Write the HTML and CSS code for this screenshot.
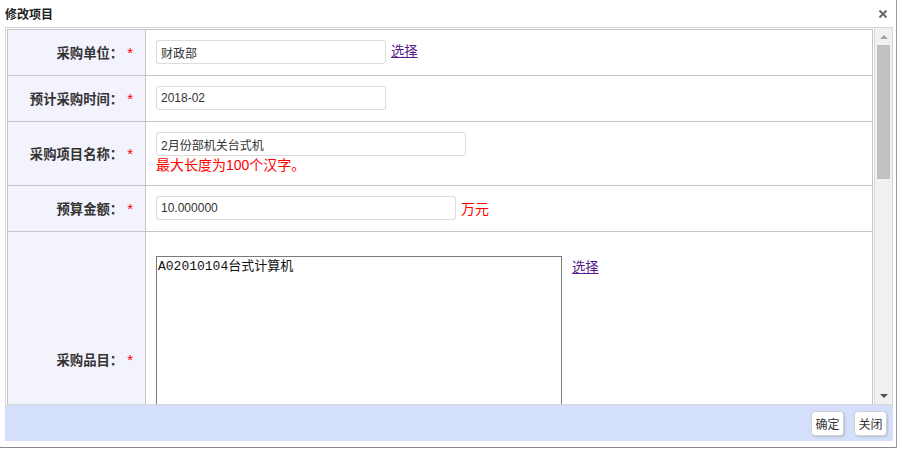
FILE: index.html
```html
<!DOCTYPE html>
<html lang="zh-CN">
<head>
    <meta charset="UTF-8">
    <title>修改项目</title>
    <link rel="stylesheet" href="styles.css">
</head>
<body>
    <div class="dialog">
        <div class="dialog-head">
            <span class="dialog-title">修改项目</span>
            <a href="#" class="dialog-close" title="关闭">
                <svg width="8" height="8" viewBox="0 0 8 8">
                    <path d="M0.5 0.5 L7.5 7.5 M7.5 0.5 L0.5 7.5" stroke="#6a6a6a" stroke-width="2" fill="none"/>
                </svg>
            </a>
        </div>

        <div class="dialog-body">
            <div class="form-scroll">
                <table class="form-table">
                    <tr>
                        <th>采购单位：<span class="req">*</span></th>
                        <td>
                            <div class="field">
                                <input type="text" class="txt" value="财政部">
                                <a href="#" class="pick">选择</a>
                            </div>
                        </td>
                    </tr>
                    <tr>
                        <th>预计采购时间：<span class="req">*</span></th>
                        <td>
                            <div class="field">
                                <input type="text" class="txt" value="2018-02">
                            </div>
                        </td>
                    </tr>
                    <tr>
                        <th>采购项目名称：<span class="req">*</span></th>
                        <td class="with-hint">
                            <div class="field">
                                <input type="text" class="txt txt-long" value="2月份部机关台式机">
                            </div>
                            <div class="hint">最大长度为100个汉字。</div>
                        </td>
                    </tr>
                    <tr>
                        <th>预算金额：<span class="req">*</span></th>
                        <td>
                            <div class="field">
                                <input type="text" class="txt txt-money" value="10.000000">
                                <span class="unit">万元</span>
                            </div>
                        </td>
                    </tr>
                    <tr>
                        <th>采购品目：<span class="req">*</span></th>
                        <td class="with-area">
                            <div class="field field-top">
                                <textarea class="area">A02010104台式计算机</textarea>
                                <a href="#" class="pick">选择</a>
                            </div>
                        </td>
                    </tr>
                </table>
            </div>

            <!-- scrollbar of the form area -->
            <div class="scrollbar">
                <div class="sb-btn"><span class="arrow-up"></span></div>
                <div class="sb-track"><div class="sb-thumb"></div></div>
                <div class="sb-btn"><span class="arrow-down"></span></div>
            </div>
        </div>

        <div class="dialog-foot">
            <button class="btn">确定</button>
            <button class="btn">关闭</button>
        </div>
    </div>
</body>
</html>
```

FILE: styles.css
```css
body {
    margin: 0;
    font-family: "Liberation Sans", "Noto Sans CJK SC", sans-serif;
    background-color: #fff;
    color: #333;
}

.dialog {
    width: 896px;
    height: 447px;
    border-right: 1px solid #9a9a9a;
    border-bottom: 1px solid #8a8a8a;
    background: #fff;
}

.dialog-head {
    height: 27px;
    display: flex;
    align-items: center;
    justify-content: space-between;
    padding: 0 9px 0 5px;
}

.dialog-title {
    font-size: 12px;
    font-weight: bold;
    color: #222;
}

.dialog-close {
    display: flex;
    margin-top: 1px;
}

.dialog-body {
    display: flex;
    height: 376px;
    margin: 0 3px 0 5px;
    border: 1px solid #d6d6d6;
}

.form-scroll {
    flex: 1;
    overflow: hidden;
    padding: 1px 1px 0 1px;
}

.form-table {
    width: 100%;
    border-collapse: collapse;
    border: 1px solid #c6c6c6;
}

.form-table th,
.form-table td {
    border: 1px solid #c6c6c6;
}

.form-table th {
    width: 125px;
    padding: 0 12px 0 0;
    background-color: #f3f3fd;
    text-align: right;
    font-size: 13.33px;
    font-weight: bold;
    color: #333;
    white-space: nowrap;
}

.req {
    color: #f00;
    font-weight: normal;
    font-size: 15px;
    margin-left: 4px;
}

.form-table td {
    padding: 10px 10px 11px;
    background: #fff;
}

.field {
    display: flex;
    align-items: center;
    gap: 5px;
    height: 24px;
}

.field-top {
    align-items: flex-start;
    gap: 10px;
    height: auto;
}

.txt {
    width: 230px;
    height: 24px;
    box-sizing: border-box;
    padding: 0 4px;
    border: 1px solid #dcdcdc;
    border-radius: 3px;
    font-family: "Liberation Sans", "Noto Sans CJK SC", sans-serif;
    font-size: 12px;
    color: #333;
    margin: 0;
}

.txt-long {
    width: 310px;
}

.txt-money {
    width: 300px;
}

.pick {
    color: #551a8b;
    font-size: 13.33px;
    line-height: 16px;
    text-decoration: underline;
}

.field-top .pick {
    margin-top: 4px;
}

.unit,
.hint {
    color: #f00;
    font-size: 14px;
}

.hint {
    line-height: 18px;
}

.form-table td.with-hint {
    padding-bottom: 11px;
}

.form-table td.with-area {
    padding: 24px 10px;
}

.area {
    width: 406px;
    height: 206px;
    box-sizing: border-box;
    margin: 0;
    padding: 2px 1px;
    border: 1px solid #7a7a7a;
    font-family: "Liberation Mono", "Noto Sans CJK SC", monospace;
    font-size: 13px;
    line-height: 15px;
    color: #111;
    resize: none;
}

/* hand drawn scrollbar */
.scrollbar {
    width: 17px;
    display: flex;
    flex-direction: column;
    background-color: #f1f1f1;
    border-left: 1px solid #dadada;
}

.sb-btn {
    height: 17px;
    display: flex;
    align-items: center;
    justify-content: center;
}

.arrow-up,
.arrow-down {
    width: 0;
    height: 0;
    border-left: 4px solid transparent;
    border-right: 4px solid transparent;
}

.arrow-up {
    border-bottom: 4px solid #a3a3a3;
}

.arrow-down {
    border-top: 4px solid #505050;
}

.sb-track {
    flex: 1;
    padding: 0 2px;
}

.sb-thumb {
    height: 134px;
    background-color: #c1c1c1;
}

.dialog-foot {
    height: 36px;
    margin: 0 3px 0 5px;
    background-color: #d4dffb;
    display: flex;
    justify-content: flex-end;
    align-items: flex-start;
    gap: 10px;
    padding: 6px 6px 0 0;
    box-sizing: border-box;
}

.btn {
    width: 33px;
    height: 25px;
    padding: 0;
    background: #fff;
    border: 1px solid #d2d2d2;
    border-radius: 4px;
    box-shadow: 1px 1px 2px rgba(0,0,0,0.15);
    font-family: "Liberation Sans", "Noto Sans CJK SC", sans-serif;
    font-size: 12px;
    color: #333;
    cursor: pointer;
}
```
